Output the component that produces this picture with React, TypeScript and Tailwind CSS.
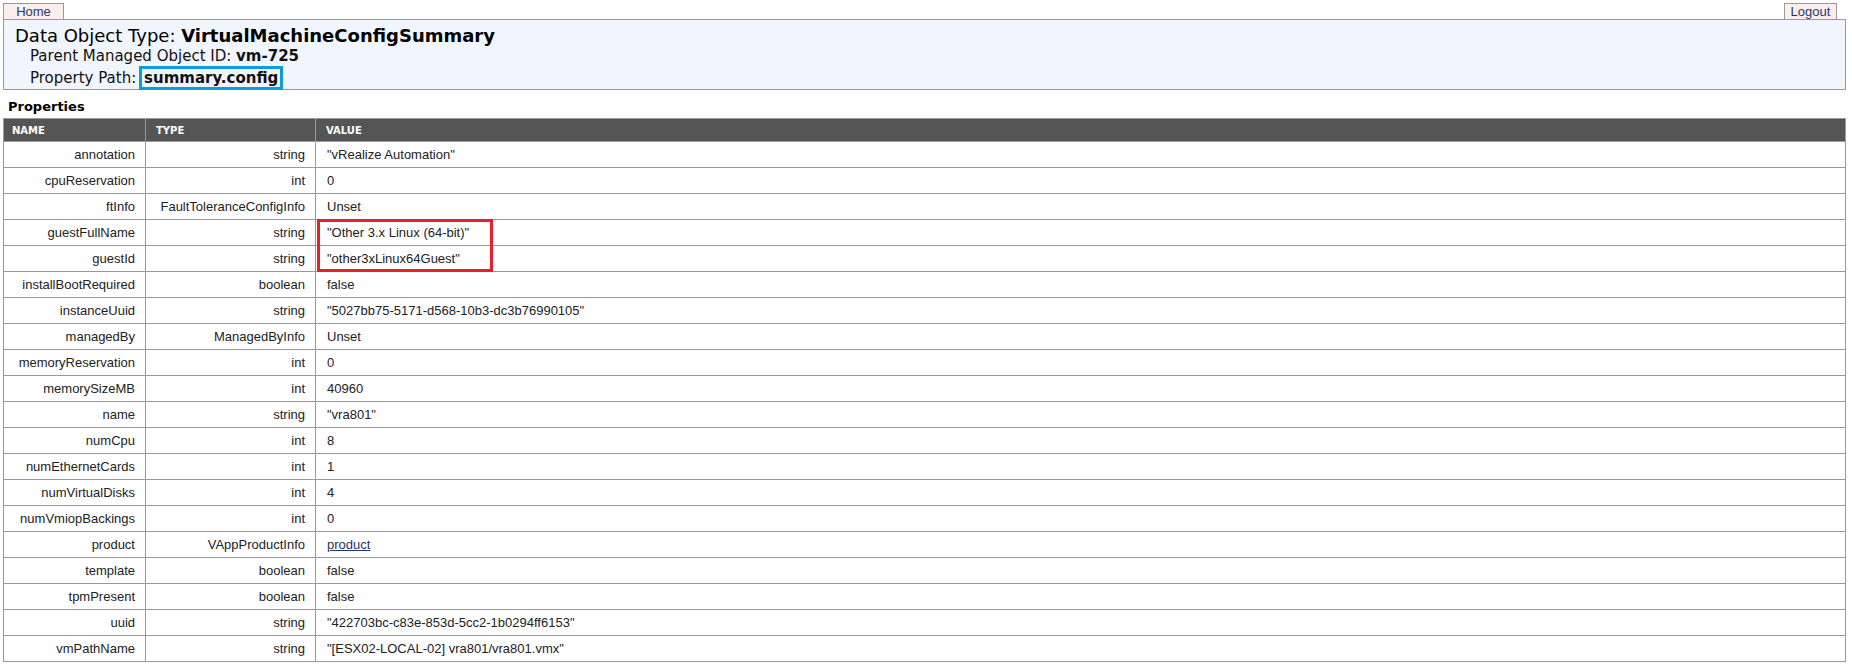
const rows: [string, string, string][] = [
  ["annotation", "string", '"vRealize Automation"'],
  ["cpuReservation", "int", "0"],
  ["ftInfo", "FaultToleranceConfigInfo", "Unset"],
  ["guestFullName", "string", '"Other 3.x Linux (64-bit)"'],
  ["guestId", "string", '"other3xLinux64Guest"'],
  ["installBootRequired", "boolean", "false"],
  ["instanceUuid", "string", '"5027bb75-5171-d568-10b3-dc3b76990105"'],
  ["managedBy", "ManagedByInfo", "Unset"],
  ["memoryReservation", "int", "0"],
  ["memorySizeMB", "int", "40960"],
  ["name", "string", '"vra801"'],
  ["numCpu", "int", "8"],
  ["numEthernetCards", "int", "1"],
  ["numVirtualDisks", "int", "4"],
  ["numVmiopBackings", "int", "0"],
  ["product", "VAppProductInfo", "product"],
  ["template", "boolean", "false"],
  ["tpmPresent", "boolean", "false"],
  ["uuid", "string", '"422703bc-c83e-853d-5cc2-1b0294ff6153"'],
  ["vmPathName", "string", '"[ESX02-LOCAL-02] vra801/vra801.vmx"'],
];

function Tab({ label, w }: { label: string; w: string }) {
  return (
    <a
      className={`${w} h-[16px] flex items-center justify-center border border-b-0 border-[#999] bg-[#fbeeec] text-[#1b3a78] text-[13px] leading-[15px] font-['Liberation_Sans',sans-serif]`}
    >
      {label}
    </a>
  );
}

export default function App() {
  return (
    <div className="bg-white w-[1852px] h-[672px] px-[3px] pt-[3px] font-['DejaVu_Sans',sans-serif] text-black">
      <div className="flex justify-between pr-[12px]">
        <Tab label="Home" w="w-[61px]" />
        <Tab label="Logout" w="w-[53px]" />
      </div>
      <div className="border border-[#999] bg-[#f1f6fe] w-[1843px] pl-[11px] pt-[5px]">
        <div className="text-[18px] leading-[22px]">
          Data Object Type: <b>VirtualMachineConfigSummary</b>
        </div>
        <div className="pl-[15px] text-[15px] leading-[19px] text-[#111]">
          <div>
            Parent Managed Object ID: <b>vm-725</b>
          </div>
          <div className="-mb-[1px]">
            Property Path:{" "}
            <span className="inline-block border-[3px] border-[#0a9ee0] px-[2px] leading-[18px] -ml-[2px] font-bold">
              summary.config
            </span>
          </div>
        </div>
      </div>
      <div className="pl-[5px] pt-[9px] pb-[4px] text-[13px] leading-[15px] font-bold">Properties</div>
      <table className="w-[1843px] border-collapse border border-[#999] text-[13px] text-[#222] font-['Liberation_Sans',sans-serif]">
        <thead>
          <tr className="bg-[#555] text-white text-[10px] h-[23px] font-['DejaVu_Sans',sans-serif]">
            <th className="w-[142px] text-left pl-[8px] font-bold border border-[#999]">NAME</th>
            <th className="w-[170px] text-left pl-[10px] font-bold border border-[#999]">TYPE</th>
            <th className="text-left pl-[10px] font-bold border border-[#999]">VALUE</th>
          </tr>
        </thead>
        <tbody>
          {rows.map(([n, t, v]) => (
            <tr key={n} className="h-[26px]">
              <td className="text-right pr-[10px] border border-[#999]">{n}</td>
              <td className="text-right pr-[10px] border border-[#999]">{t}</td>
              <td className="relative pl-[11px] border border-[#999]">
                {n === "product" ? (
                  <a className="underline text-[#1f3566]">{v}</a>
                ) : (
                  v
                )}
                {n === "guestFullName" && (
                  <div className="absolute left-[1px] top-[-1px] w-[176px] h-[53px] border-[3px] border-[#e8202a]" />
                )}
              </td>
            </tr>
          ))}
        </tbody>
      </table>
    </div>
  );
}
